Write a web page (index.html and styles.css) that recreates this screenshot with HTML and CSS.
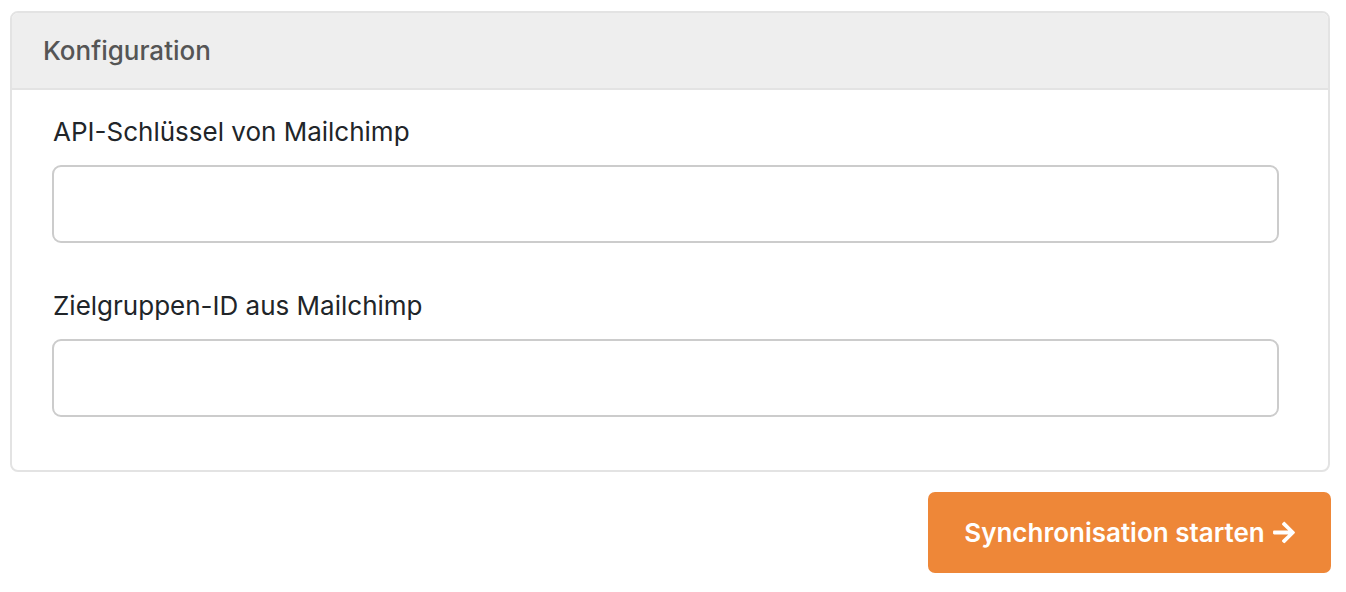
FILE: index.html
```html
<!DOCTYPE html>
<html lang="de">
<head>
<meta charset="utf-8">
<title>Konfiguration</title>
<link rel="stylesheet" href="styles.css">
</head>
<body>
<div class="page">
  <section class="panel">
    <header class="panel-heading">Konfiguration</header>
    <div class="panel-body">
      <div class="field">
        <label class="field-label" for="api">API-Schlüssel von Mailchimp</label>
        <input class="field-input" id="api" type="text">
      </div>
      <div class="field">
        <label class="field-label" for="list">Zielgruppen-ID aus Mailchimp</label>
        <input class="field-input" id="list" type="text">
      </div>
    </div>
  </section>
  <div class="actions">
    <button class="btn-primary" type="button">Synchronisation starten <svg class="arrow" viewBox="0 0 448 512" aria-hidden="true"><path d="M190.5 66.9l22.2-22.2c9.4-9.4 24.6-9.4 33.9 0L441 239c9.4 9.4 9.4 24.6 0 33.9L246.6 467.3c-9.4 9.4-24.6 9.4-33.9 0l-22.2-22.2c-9.5-9.5-9.3-25 .4-34.3L311.4 296H24c-13.3 0-24-10.7-24-24v-32c0-13.3 10.7-24 24-24h287.4L190.9 101.2c-9.8-9.3-10-24.8-.4-34.3z" fill="currentColor"/></svg></button>
  </div>
</div>
</body>
</html>
```
FILE: styles.css
```css
html, body {
  margin: 0;
  padding: 0;
  background: #ffffff;
}

body {
  font-family: Inter, "Noto Sans", "Liberation Sans", sans-serif;
  color: #212529;
}

.page {
  width: 1320px;
  padding: 11px 0 0 10px;
}

.panel {
  border: 2px solid #e3e3e3;
  border-radius: 8px;
  overflow: hidden;
  background: #fff;
}

.panel-heading {
  background: #eeeeee;
  border-bottom: 2px solid #e3e3e3;
  box-sizing: border-box;
  height: 77px;
  display: flex;
  align-items: center;
  padding: 0 31px;
  font-size: 26px;
  font-weight: 500;
  color: #555555;
}

.panel-body {
  padding: 24px 49px 53px 40px;
  display: flex;
  flex-direction: column;
  gap: 45px;
}

.field {
  display: flex;
  flex-direction: column;
  gap: 15px;
}

.field-label {
  font-size: 26px;
  line-height: 36px;
  padding-left: 1px;
  color: #212529;
}

.field-input {
  box-sizing: border-box;
  height: 78px;
  width: 100%;
  border: 2px solid #cccccc;
  border-radius: 9px;
  background: #fff;
  font: inherit;
  margin: 0;
  padding: 0 16px;
  outline: none;
}

.actions {
  display: flex;
  justify-content: flex-end;
  margin-top: 20px;
}

.btn-primary {
  display: flex;
  align-items: center;
  gap: 8px;
  height: 81px;
  width: 403px;
  justify-content: center;
  border: none;
  border-radius: 7px;
  background: #ee8738;
  color: #ffffff;
  font-family: Inter, "Noto Sans", "Liberation Sans", sans-serif;
  font-size: 26px;
  font-weight: 600;
  margin-right: -1px;
  cursor: pointer;
}

.arrow {
  width: 22px;
  height: 25px;
}
```
